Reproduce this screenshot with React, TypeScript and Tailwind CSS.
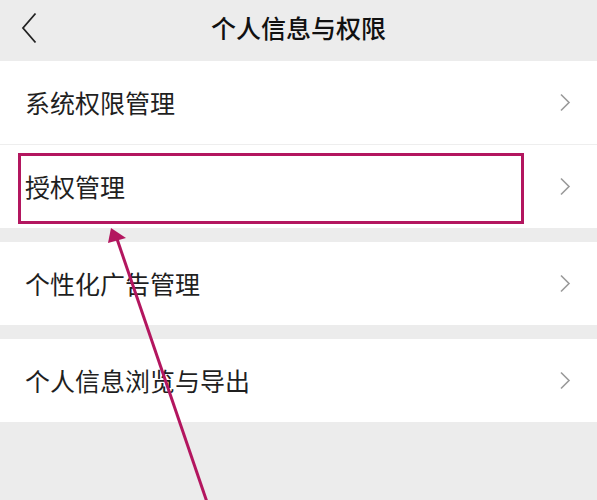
import React from 'react';

const items = [
  { group: 0, label: '系统权限管理' },
  { group: 0, label: '授权管理', marked: true },
  { group: 1, label: '个性化广告管理' },
  { group: 2, label: '个人信息浏览与导出' },
];

const Chevron = () => (
  <svg width="12" height="19" viewBox="0 0 12 19" fill="none" className="shrink-0">
    <path d="M2 1.5 L10 9.5 L2 17.5" stroke="#9a9a9a" strokeWidth="1.6" />
  </svg>
);

const Row = ({ label, marked }: { label: string; marked?: boolean }) => (
  <div className="relative h-[83px] bg-white flex items-center pl-[25px] pr-[26px]">
    <span className="flex-1 text-[25px] text-[#1f1f1f]">{label}</span>
    <Chevron />
    {marked && (
      <div className="absolute left-[18px] top-[8px] w-[506px] h-[71px] border-[3px] border-[#b3165f] pointer-events-none" />
    )}
  </div>
);

export default function App() {
  const groups = [0, 1, 2];
  return (
    <div
      className="relative w-[597px] h-[500px] overflow-hidden bg-[#ececec]"
      style={{ fontFamily: '"Noto Sans CJK SC", "Noto Sans", sans-serif' }}
    >
      <div className="h-[61px] flex items-start">
        <div className="relative w-full h-[56px] flex items-center justify-center">
          <svg width="18" height="32" viewBox="0 0 18 32" fill="none" className="absolute left-[20px] top-[12px]">
            <path d="M15.5 1.5 L3 16 L15.5 30.5" stroke="#222" strokeWidth="1.8" />
          </svg>
          <span className="text-[25px] font-medium text-[#111]">个人信息与权限</span>
        </div>
      </div>

      <div className="flex flex-col gap-[14px]">
        {groups.map(g => (
          <div key={g} className="flex flex-col">
            {items
              .filter(i => i.group === g)
              .map((i, idx) => (
                <div key={i.label}>
                  {idx > 0 && <div className="h-px bg-[#eeeeee]" />}
                  <Row label={i.label} marked={i.marked} />
                </div>
              ))}
          </div>
        ))}
      </div>

      <svg className="absolute inset-0 pointer-events-none" width="597" height="500" viewBox="0 0 597 500">
        <line x1="208" y1="505" x2="116" y2="236" stroke="#b3165f" strokeWidth="3" />
        <polygon points="111,228 126,238 108,243" fill="#b3165f" />
      </svg>
    </div>
  );
}
